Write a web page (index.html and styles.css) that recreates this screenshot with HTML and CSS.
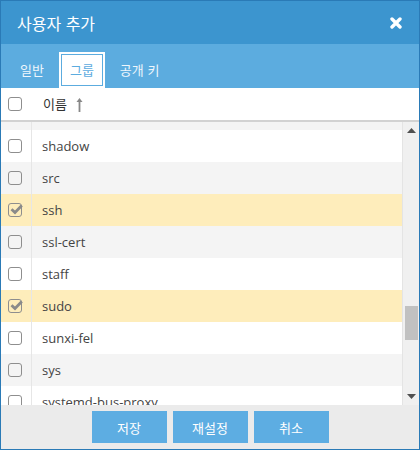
FILE: index.html
```html
<!DOCTYPE html>
<html lang="ko">
<head>
<meta charset="utf-8">
<title>사용자 추가</title>
<link rel="stylesheet" href="styles.css">
</head>
<body>
<div class="dialog">
  <div class="titlebar">
    <span class="title">사용자 추가</span>
    <svg class="close" width="12" height="12" viewBox="0 0 12 12"><path d="M2 2L10 10M10 2L2 10" stroke="#fff" stroke-width="3.4" stroke-linecap="round"/></svg>
  </div>
  <div class="tabs">
    <div class="tab">일반</div>
    <div class="tab active">그룹</div>
    <div class="tab">공개 키</div>
  </div>
  <div class="head">
    <div class="cbcell"><span class="cb"></span></div>
    <div class="name"><span>이름</span>
      <svg class="sort" width="7" height="15" viewBox="0 0 7 15"><path d="M3.5 1L0.5 5H2.6V15H4.4V5H6.5Z" fill="#888"/></svg>
    </div>
  </div>
  <div class="body">
    <div class="viewport">
      <div class="list">
        <div class="row alt"><div class="cbcell"><span class="cb"></span></div><div class="name">scanner</div></div>
        <div class="row"><div class="cbcell"><span class="cb"></span></div><div class="name">shadow</div></div>
        <div class="row alt"><div class="cbcell"><span class="cb"></span></div><div class="name">src</div></div>
        <div class="row sel"><div class="cbcell"><span class="cb"><svg class="check" width="13" height="11" viewBox="0 0 13 11"><path d="M1.5 5.2L5 8.6L11.8 1.6" fill="none" stroke="#8a8a8a" stroke-width="2.8"/></svg></span></div><div class="name">ssh</div></div>
        <div class="row alt"><div class="cbcell"><span class="cb"></span></div><div class="name">ssl-cert</div></div>
        <div class="row"><div class="cbcell"><span class="cb"></span></div><div class="name">staff</div></div>
        <div class="row sel"><div class="cbcell"><span class="cb"><svg class="check" width="13" height="11" viewBox="0 0 13 11"><path d="M1.5 5.2L5 8.6L11.8 1.6" fill="none" stroke="#8a8a8a" stroke-width="2.8"/></svg></span></div><div class="name">sudo</div></div>
        <div class="row"><div class="cbcell"><span class="cb"></span></div><div class="name">sunxi-fel</div></div>
        <div class="row alt"><div class="cbcell"><span class="cb"></span></div><div class="name">sys</div></div>
        <div class="row"><div class="cbcell"><span class="cb"></span></div><div class="name">systemd-bus-proxy</div></div>
      </div>
    </div>
    <div class="scrollbar">
      <div class="sbtn"><svg width="9" height="5" viewBox="0 0 9 5"><path d="M0 5L4.5 0L9 5Z" fill="#505050"/></svg></div>
      <div class="track"><div class="thumb" style="margin-top:167px"></div></div>
      <div class="sbtn"><svg width="9" height="5" viewBox="0 0 9 5"><path d="M0 0L4.5 5L9 0Z" fill="#505050"/></svg></div>
    </div>
  </div>
  <div class="footer">
    <button class="btn">저장</button>
    <button class="btn">재설정</button>
    <button class="btn">취소</button>
  </div>
</div>
</body>
</html>
```
FILE: styles.css
```css
html, body {
  margin: 0;
  padding: 0;
  background: #fff;
}
body {
  font-family: "Open Sans", "Noto Sans CJK KR", sans-serif;
  font-size: 13px;
  color: #444;
}
.dialog {
  width: 420px;
  height: 450px;
  box-sizing: border-box;
  border: 1px solid #2a7ab6;
  display: flex;
  flex-direction: column;
  overflow: hidden;
}
.titlebar {
  height: 43px;
  flex: none;
  background: #3c95cf;
  display: flex;
  align-items: center;
  justify-content: space-between;
  padding: 0 17px 0 16px;
}
.title {
  color: #fff;
  font-family: "Noto Sans CJK KR", sans-serif;
  font-size: 16px;
  line-height: 20px;
}
.close { display: block; }
.tabs {
  height: 44px;
  flex: none;
  box-sizing: border-box;
  background: #5cacdf;
  padding: 8px 0 0 8px;
  display: flex;
  gap: 4px;
}
.tab {
  height: 36px;
  box-sizing: border-box;
  border: 2px solid transparent;
  padding: 0 9px;
  color: #eef6fc;
  font-family: "Noto Sans CJK KR", sans-serif;
  font-size: 13px;
  line-height: 32px;
}
.tab.active {
  background: #fff;
  border-color: #fff;
  box-shadow: inset 0 0 0 1px #5cacdf;
  color: #5cacdf;
}
.head {
  height: 32px;
  flex: none;
  display: flex;
  align-items: center;
  border-bottom: 2px solid #d2d2d2;
  background: #fff;
  color: #333;
}
.head .name {
  display: flex;
  align-items: center;
  gap: 9px;
  font-family: "Noto Sans CJK KR", sans-serif;
}
.sort { display: block; }
.cbcell {
  width: 31px;
  height: 100%;
  flex: none;
  box-sizing: border-box;
  padding-left: 7px;
  display: flex;
  align-items: center;
}
.cb {
  width: 14px;
  height: 14px;
  box-sizing: border-box;
  border: 1.6px solid #8e8e8e;
  border-radius: 3px;
  display: flex;
  align-items: center;
  justify-content: center;
}
.check {
  display: block;
  flex: none;
  margin-left: 3px;
  margin-top: -2px;
}
.name {
  padding-left: 11px;
  line-height: 20px;
}
.body {
  flex: 1;
  display: flex;
  min-height: 0;
}
.viewport {
  flex: 1;
  overflow: hidden;
}
.list {
  margin-top: -24px;
}
.row {
  height: 32px;
  display: flex;
  align-items: center;
  background: #fff;
}
.row.alt { background: #f4f4f4; }
.row.sel { background: #feedbb; }
.row .cbcell { border-right: 1px solid #e6e6e6; }
.row .name { padding-left: 10px; }
.scrollbar {
  width: 17px;
  flex: none;
  box-sizing: border-box;
  border-left: 1px solid #e4e4e4;
  background: #f0f0f0;
  display: flex;
  flex-direction: column;
}
.sbtn {
  height: 17px;
  flex: none;
  display: flex;
  align-items: center;
  justify-content: center;
}
.sbtn svg { display: block; }
.track {
  flex: 1;
  display: flex;
  flex-direction: column;
  align-items: center;
}
.thumb {
  width: 13px;
  height: 34px;
  background: #c1c1c1;
}
.footer {
  height: 44px;
  flex: none;
  background: #ebebeb;
  display: flex;
  justify-content: center;
  align-items: center;
  gap: 6px;
}
.btn {
  width: 75px;
  height: 32px;
  border: none;
  margin: 0;
  padding: 0;
  background: #5dade2;
  color: #fff;
  font-family: "Noto Sans CJK KR", sans-serif;
  font-size: 13px;
}
```
